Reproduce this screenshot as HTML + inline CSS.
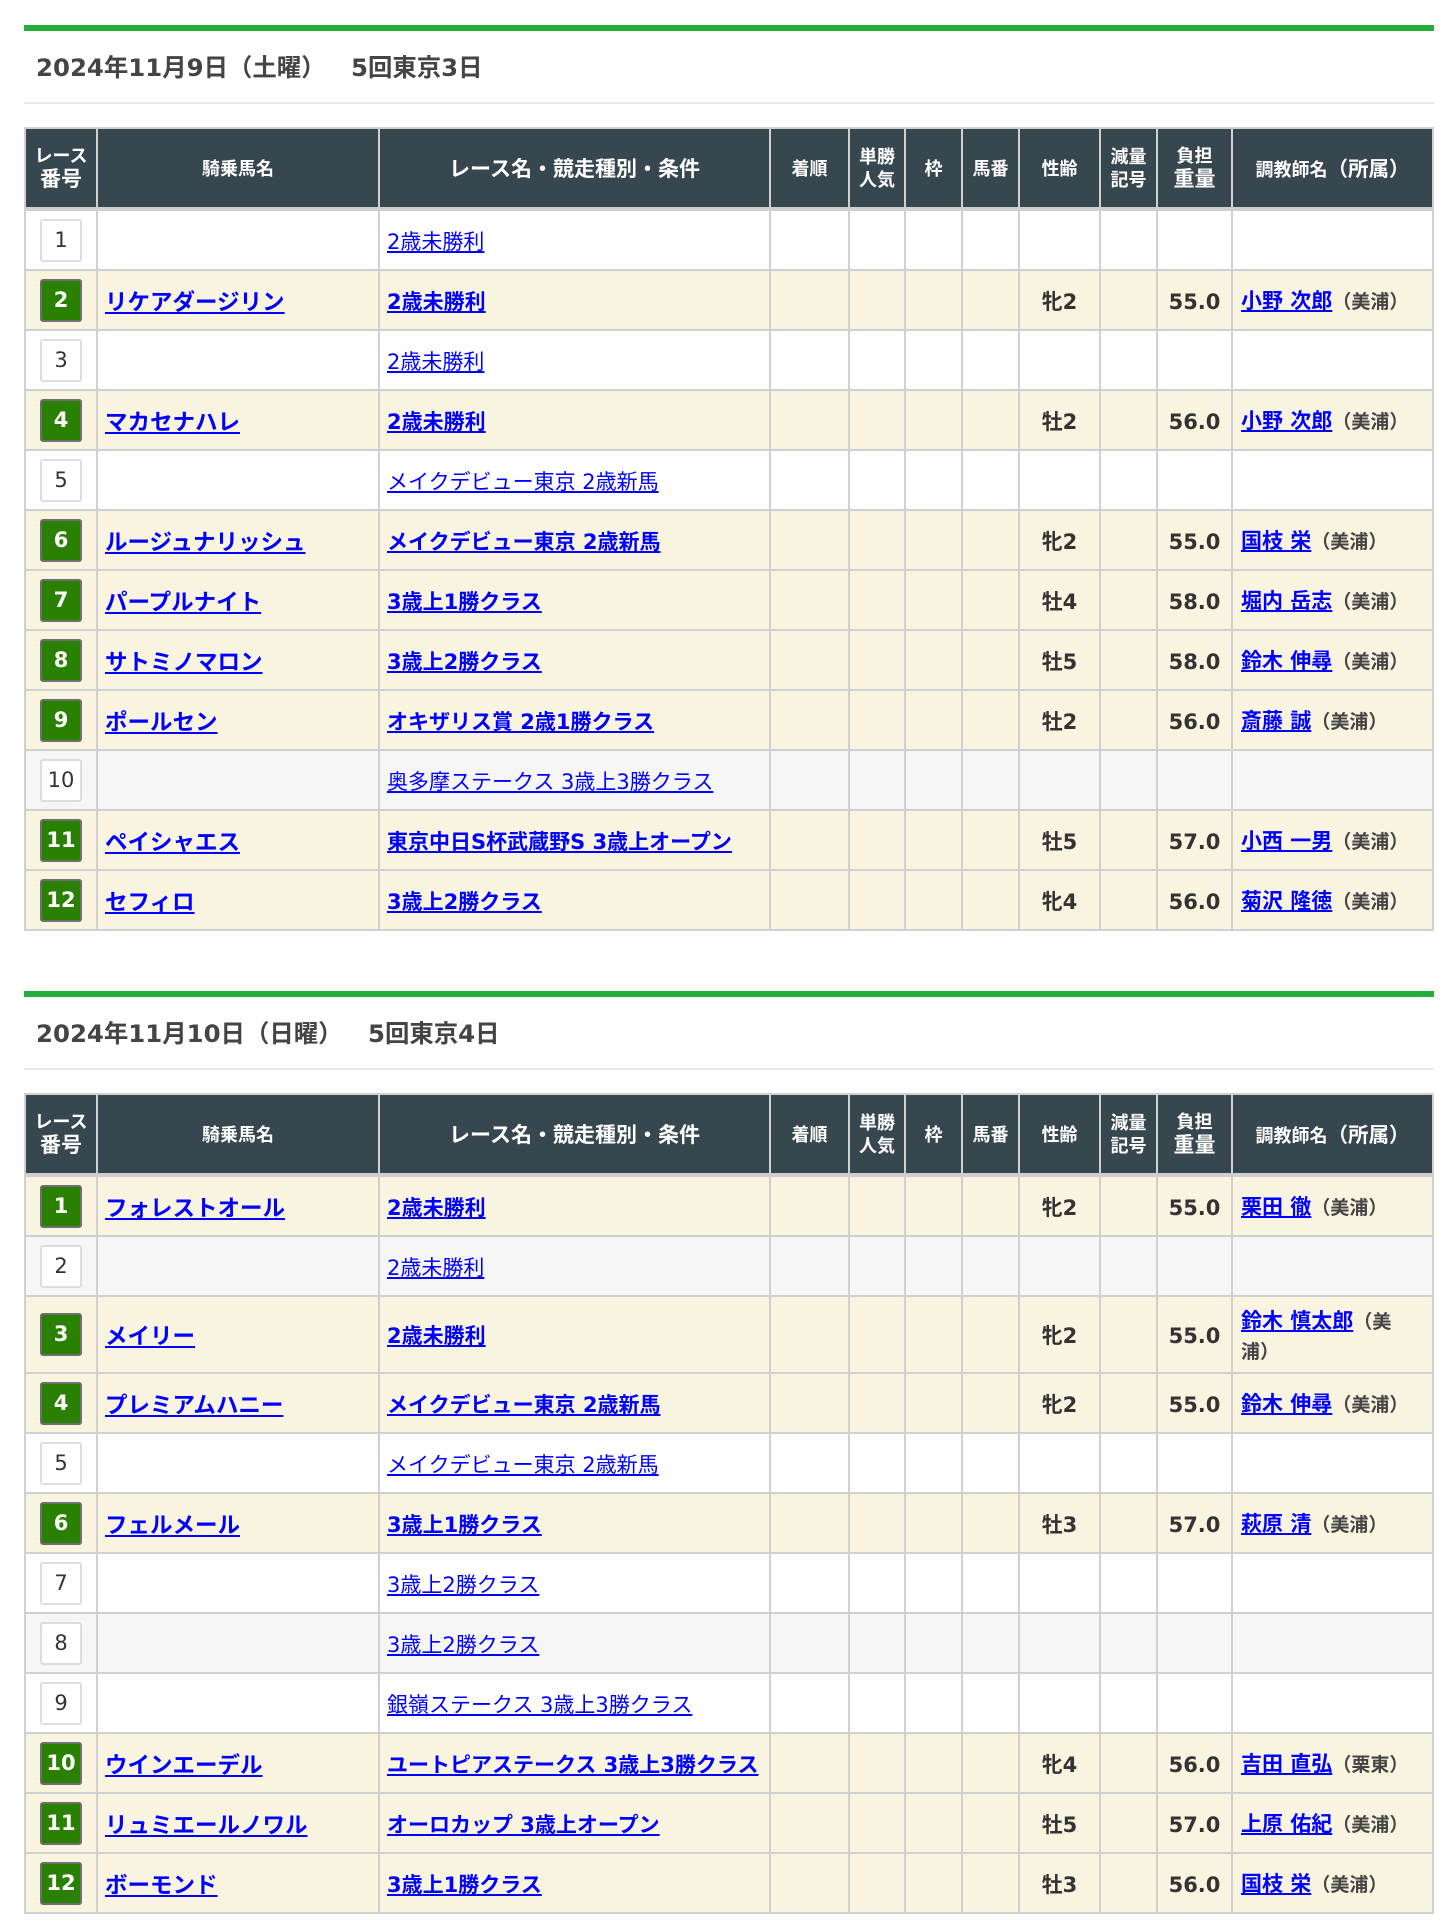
<!DOCTYPE html>
<html lang="ja"><head><meta charset="utf-8"><title>出走表</title>
<style>
html,body{margin:0;padding:0;background:#fff}
body{width:1449px;height:1927px;overflow:hidden;position:relative;font-family:"DejaVu Sans","Noto Sans CJK JP",sans-serif;color:#333}
.sec{position:absolute;left:24px;width:1410px}
.bar{height:6px;background:#22ae38}
h2{margin:0;height:71px;line-height:74px;border-bottom:2px solid #e8e8e8;padding-left:12px;font-size:24.4px;font-weight:bold;color:#444;white-space:pre}
table{position:absolute;left:0;top:102px;width:1410px;border-collapse:collapse;table-layout:fixed}
th,td{border:2px solid #d0d0d0;padding:0}
th{background:#37474f;color:#fff;font-size:18px;font-weight:bold;line-height:23px;height:75px;padding-top:3px;border-bottom:4px solid #cfcfcf;text-align:center}
th.d{padding-top:1px}
th .b{font-size:21px}th .s{font-size:18px}th .m{font-size:21px}th .p{font-size:20.5px}
td{height:58px;font-size:21px;line-height:30px}
td.l,td.h,td.c,td.w,td.t{height:auto;padding-top:3px}
td.l{padding-left:7px;white-space:nowrap}
td.h{padding-top:5px;padding-left:7px;white-space:nowrap;font-size:22.5px}
td.c{text-align:center;font-weight:bold}
td.w{text-align:center;font-weight:bold;font-size:21px}
td.t{padding-left:8px;padding-right:8px;font-weight:bold;font-size:19px;color:#444}
td.t a{font-size:21px}
a{color:#00f;text-decoration:underline}
tr.y td{background:#f9f4df}
tr.g td{background:#f6f6f6}
tr.y a{font-weight:bold}
tr.tall td:first-child{height:75px}
.n{display:block;box-sizing:border-box;width:42px;height:43px;margin:0 auto;border:2px solid #ddd;border-radius:3px;background:#fff;text-align:center;line-height:38px;font-size:21px;color:#333}
tr.y .n{background:#2a8000;border-color:#6f6f6f;color:#fff;font-weight:bold}
</style></head><body>

<div class="sec" style="top:25px"><div class="bar"></div><h2>2024年11月9日（土曜）   5回東京3日</h2>
<table><colgroup><col style="width:72px"><col style="width:282px"><col style="width:391px"><col style="width:79px"><col style="width:56px"><col style="width:57px"><col style="width:57px"><col style="width:81px"><col style="width:57px"><col style="width:75px"><col style="width:201px"></colgroup>
<tr><th class="d"><span class="s">レース</span><br><span class="b">番号</span></th><th>騎乗馬名</th><th><span class="m">レース名・競走種別・条件</span></th><th>着順</th><th class="d">単勝<br>人気</th><th>枠</th><th>馬番</th><th>性齢</th><th class="d">減量<br>記号</th><th class="d">負担<br><span class="b">重量</span></th><th>調教師名<span class="p">（所属）</span></th></tr>
<tr><td><span class="n">1</span></td><td></td><td class="l"><a>2歳未勝利</a></td><td></td><td></td><td></td><td></td><td></td><td></td><td></td><td></td></tr>
<tr class="y"><td><span class="n">2</span></td><td class="h"><a>リケアダージリン</a></td><td class="l"><a>2歳未勝利</a></td><td></td><td></td><td></td><td></td><td class="c">牝2</td><td></td><td class="w">55.0</td><td class="t"><a>小野 次郎</a>（美浦）</td></tr>
<tr><td><span class="n">3</span></td><td></td><td class="l"><a>2歳未勝利</a></td><td></td><td></td><td></td><td></td><td></td><td></td><td></td><td></td></tr>
<tr class="y"><td><span class="n">4</span></td><td class="h"><a>マカセナハレ</a></td><td class="l"><a>2歳未勝利</a></td><td></td><td></td><td></td><td></td><td class="c">牡2</td><td></td><td class="w">56.0</td><td class="t"><a>小野 次郎</a>（美浦）</td></tr>
<tr><td><span class="n">5</span></td><td></td><td class="l"><a>メイクデビュー東京 2歳新馬</a></td><td></td><td></td><td></td><td></td><td></td><td></td><td></td><td></td></tr>
<tr class="y"><td><span class="n">6</span></td><td class="h"><a>ルージュナリッシュ</a></td><td class="l"><a>メイクデビュー東京 2歳新馬</a></td><td></td><td></td><td></td><td></td><td class="c">牝2</td><td></td><td class="w">55.0</td><td class="t"><a>国枝 栄</a>（美浦）</td></tr>
<tr class="y"><td><span class="n">7</span></td><td class="h"><a>パープルナイト</a></td><td class="l"><a>3歳上1勝クラス</a></td><td></td><td></td><td></td><td></td><td class="c">牡4</td><td></td><td class="w">58.0</td><td class="t"><a>堀内 岳志</a>（美浦）</td></tr>
<tr class="y"><td><span class="n">8</span></td><td class="h"><a>サトミノマロン</a></td><td class="l"><a>3歳上2勝クラス</a></td><td></td><td></td><td></td><td></td><td class="c">牡5</td><td></td><td class="w">58.0</td><td class="t"><a>鈴木 伸尋</a>（美浦）</td></tr>
<tr class="y"><td><span class="n">9</span></td><td class="h"><a>ポールセン</a></td><td class="l"><a>オキザリス賞 2歳1勝クラス</a></td><td></td><td></td><td></td><td></td><td class="c">牡2</td><td></td><td class="w">56.0</td><td class="t"><a>斎藤 誠</a>（美浦）</td></tr>
<tr class="g"><td><span class="n">10</span></td><td></td><td class="l"><a>奥多摩ステークス 3歳上3勝クラス</a></td><td></td><td></td><td></td><td></td><td></td><td></td><td></td><td></td></tr>
<tr class="y"><td><span class="n">11</span></td><td class="h"><a>ペイシャエス</a></td><td class="l"><a>東京中日S杯武蔵野S 3歳上オープン</a></td><td></td><td></td><td></td><td></td><td class="c">牡5</td><td></td><td class="w">57.0</td><td class="t"><a>小西 一男</a>（美浦）</td></tr>
<tr class="y"><td><span class="n">12</span></td><td class="h"><a>セフィロ</a></td><td class="l"><a>3歳上2勝クラス</a></td><td></td><td></td><td></td><td></td><td class="c">牝4</td><td></td><td class="w">56.0</td><td class="t"><a>菊沢 隆徳</a>（美浦）</td></tr>
</table></div>

<div class="sec" style="top:991px"><div class="bar"></div><h2>2024年11月10日（日曜）   5回東京4日</h2>
<table><colgroup><col style="width:72px"><col style="width:282px"><col style="width:391px"><col style="width:79px"><col style="width:56px"><col style="width:57px"><col style="width:57px"><col style="width:81px"><col style="width:57px"><col style="width:75px"><col style="width:201px"></colgroup>
<tr><th class="d"><span class="s">レース</span><br><span class="b">番号</span></th><th>騎乗馬名</th><th><span class="m">レース名・競走種別・条件</span></th><th>着順</th><th class="d">単勝<br>人気</th><th>枠</th><th>馬番</th><th>性齢</th><th class="d">減量<br>記号</th><th class="d">負担<br><span class="b">重量</span></th><th>調教師名<span class="p">（所属）</span></th></tr>
<tr class="y"><td><span class="n">1</span></td><td class="h"><a>フォレストオール</a></td><td class="l"><a>2歳未勝利</a></td><td></td><td></td><td></td><td></td><td class="c">牝2</td><td></td><td class="w">55.0</td><td class="t"><a>栗田 徹</a>（美浦）</td></tr>
<tr class="g"><td><span class="n">2</span></td><td></td><td class="l"><a>2歳未勝利</a></td><td></td><td></td><td></td><td></td><td></td><td></td><td></td><td></td></tr>
<tr class="y tall"><td><span class="n">3</span></td><td class="h"><a>メイリー</a></td><td class="l"><a>2歳未勝利</a></td><td></td><td></td><td></td><td></td><td class="c">牝2</td><td></td><td class="w">55.0</td><td class="t"><a>鈴木 慎太郎</a>（美<br>浦）</td></tr>
<tr class="y"><td><span class="n">4</span></td><td class="h"><a>プレミアムハニー</a></td><td class="l"><a>メイクデビュー東京 2歳新馬</a></td><td></td><td></td><td></td><td></td><td class="c">牝2</td><td></td><td class="w">55.0</td><td class="t"><a>鈴木 伸尋</a>（美浦）</td></tr>
<tr><td><span class="n">5</span></td><td></td><td class="l"><a>メイクデビュー東京 2歳新馬</a></td><td></td><td></td><td></td><td></td><td></td><td></td><td></td><td></td></tr>
<tr class="y"><td><span class="n">6</span></td><td class="h"><a>フェルメール</a></td><td class="l"><a>3歳上1勝クラス</a></td><td></td><td></td><td></td><td></td><td class="c">牡3</td><td></td><td class="w">57.0</td><td class="t"><a>萩原 清</a>（美浦）</td></tr>
<tr><td><span class="n">7</span></td><td></td><td class="l"><a>3歳上2勝クラス</a></td><td></td><td></td><td></td><td></td><td></td><td></td><td></td><td></td></tr>
<tr class="g"><td><span class="n">8</span></td><td></td><td class="l"><a>3歳上2勝クラス</a></td><td></td><td></td><td></td><td></td><td></td><td></td><td></td><td></td></tr>
<tr><td><span class="n">9</span></td><td></td><td class="l"><a>銀嶺ステークス 3歳上3勝クラス</a></td><td></td><td></td><td></td><td></td><td></td><td></td><td></td><td></td></tr>
<tr class="y"><td><span class="n">10</span></td><td class="h"><a>ウインエーデル</a></td><td class="l"><a>ユートピアステークス 3歳上3勝クラス</a></td><td></td><td></td><td></td><td></td><td class="c">牝4</td><td></td><td class="w">56.0</td><td class="t"><a>吉田 直弘</a>（栗東）</td></tr>
<tr class="y"><td><span class="n">11</span></td><td class="h"><a>リュミエールノワル</a></td><td class="l"><a>オーロカップ 3歳上オープン</a></td><td></td><td></td><td></td><td></td><td class="c">牡5</td><td></td><td class="w">57.0</td><td class="t"><a>上原 佑紀</a>（美浦）</td></tr>
<tr class="y"><td><span class="n">12</span></td><td class="h"><a>ボーモンド</a></td><td class="l"><a>3歳上1勝クラス</a></td><td></td><td></td><td></td><td></td><td class="c">牡3</td><td></td><td class="w">56.0</td><td class="t"><a>国枝 栄</a>（美浦）</td></tr>
</table></div>
</body></html>
